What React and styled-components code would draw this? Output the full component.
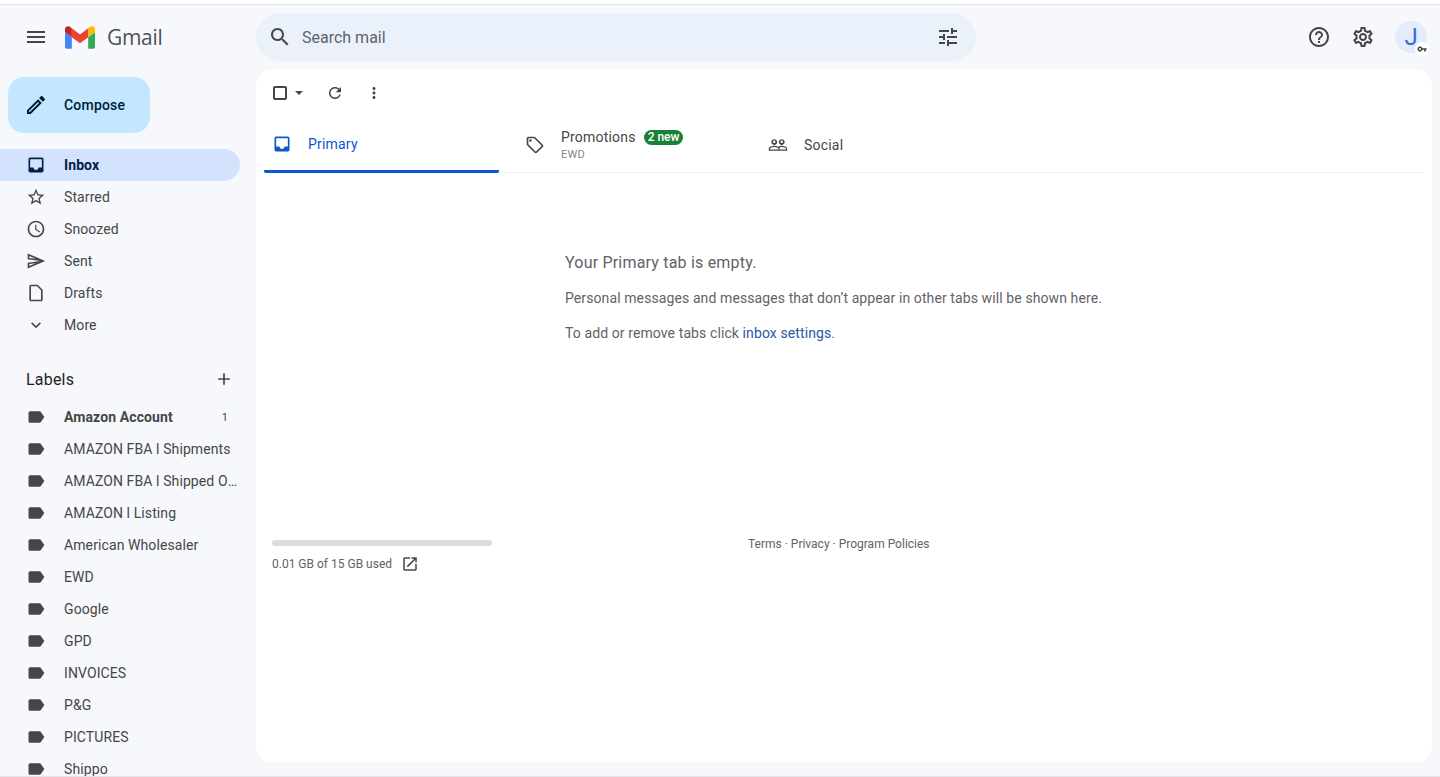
import React from "react";
import styled, { createGlobalStyle } from "styled-components";

const GlobalStyle = createGlobalStyle`
  html, body {
    margin: 0;
    height: 100%;
    overflow: hidden;
    background: #f6f8fc;
    font-family: Roboto, "Liberation Sans", sans-serif;
    color: #444746;
  }
  * { box-sizing: border-box; }
`;

const icons = {
  menu: "M3 18h18v-2H3v2zm0-5h18v-2H3v2zm0-7v2h18V6H3z",
  edit: "M14.06 9.02l.92.92L5.92 19H5v-.92l9.06-9.06M17.66 3c-.25 0-.51.1-.7.29l-1.83 1.83 3.75 3.75 1.83-1.83c.39-.39.39-1.02 0-1.41l-2.34-2.34c-.2-.2-.45-.29-.71-.29zm-3.6 3.19L3 17.25V21h3.75L17.81 9.94l-3.75-3.75z",
  inbox: "M19 3H5c-1.1 0-2 .9-2 2v14c0 1.1.9 2 2 2h14c1.1 0 2-.9 2-2V5c0-1.1-.9-2-2-2zm0 12h-4c0 1.66-1.35 3-3 3s-3-1.34-3-3H5V5h14v10z",
  star: "M22 9.24l-7.19-.62L12 2 9.19 8.63 2 9.24l5.46 4.73L5.82 21 12 17.27 18.18 21l-1.63-7.03L22 9.24zM12 15.4l-3.76 2.27 1-4.28-3.32-2.88 4.38-.38L12 6.1l1.71 4.04 4.38.38-3.32 2.88 1 4.28L12 15.4z",
  clock: "M11.99 2C6.47 2 2 6.48 2 12s4.47 10 9.99 10C17.52 22 22 17.52 22 12S17.52 2 11.99 2zM12 20c-4.42 0-8-3.58-8-8s3.58-8 8-8 8 3.58 8 8-3.58 8-8 8zm.5-13H11v6l5.25 3.15.75-1.23-4.5-2.67z",
  send: "M4.01 6.03l7.51 3.22-7.52-1 .01-2.22m7.5 8.72L4 17.97v-2.22l7.51-1M2.01 3L2 10l15 2-15 2 .01 7L23 12 2.01 3z",
  draft: "M14 2H6c-1.1 0-2 .9-2 2v16c0 1.1.9 2 2 2h12c1.1 0 2-.9 2-2V8l-6-6zM6 20V4h7.17L18 8.83V20H6z",
  expand: "M16.59 8.59L12 13.17 7.41 8.59 6 10l6 6 6-6z",
  add: "M19 13h-6v6h-2v-6H5v-2h6V5h2v6h6v2z",
  label: "M17.63 5.84C17.27 5.33 16.67 5 16 5L5 5.01C3.9 5.01 3 5.9 3 7v10c0 1.1.9 1.99 2 1.99L16 19c.67 0 1.27-.33 1.63-.84L22 12l-4.37-6.16z",
  search: "M15.5 14h-.79l-.28-.27C15.41 12.59 16 11.11 16 9.5 16 5.91 13.09 3 9.5 3S3 5.91 3 9.5 5.91 16 9.5 16c1.61 0 3.09-.59 4.23-1.57l.27.28v.79l5 4.99L20.49 19l-4.99-5zm-6 0C7.01 14 5 11.99 5 9.5S7.01 5 9.5 5 14 7.01 14 9.5 11.99 14 9.5 14z",
  tune: "M3 17v2h6v-2H3zM3 5v2h10V5H3zm10 16v-2h8v-2h-8v-2h-2v6h2zM7 9v2H3v2h4v2h2V9H7zm14 4v-2H11v2h10zm-6-4h2V7h4V5h-4V3h-2v6z",
  help: "M11 18h2v-2h-2v2zm1-16C6.48 2 2 6.48 2 12s4.48 10 10 10 10-4.48 10-10S17.52 2 12 2zm0 18c-4.41 0-8-3.59-8-8s3.59-8 8-8 8 3.59 8 8-3.59 8-8 8zm0-14c-2.21 0-4 1.79-4 4h2c0-1.1.9-2 2-2s2 .9 2 2c0 2-3 1.75-3 5h2c0-2.25 3-2.5 3-5 0-2.21-1.79-4-4-4z",
  settings: "M19.43 12.98c.04-.32.07-.64.07-.98 0-.34-.03-.66-.07-.98l2.11-1.65c.19-.15.24-.42.12-.64l-2-3.46c-.09-.16-.26-.25-.44-.25-.06 0-.12.01-.17.03l-2.49 1c-.52-.4-1.08-.73-1.69-.98l-.38-2.65C14.46 2.18 14.25 2 14 2h-4c-.25 0-.46.18-.49.42l-.38 2.65c-.61.25-1.17.59-1.69.98l-2.49-1c-.06-.02-.12-.03-.18-.03-.17 0-.34.09-.43.25l-2 3.46c-.13.22-.07.49.12.64l2.11 1.65c-.04.32-.07.65-.07.98 0 .33.03.66.07.98l-2.11 1.65c-.19.15-.24.42-.12.64l2 3.46c.09.16.26.25.44.25.06 0 .12-.01.17-.03l2.49-1c.52.4 1.08.73 1.69.98l.38 2.65c.03.24.24.42.49.42h4c.25 0 .46-.18.49-.42l.38-2.65c.61-.25 1.17-.59 1.69-.98l2.49 1c.06.02.12.03.18.03.17 0 .34-.09.43-.25l2-3.46c.12-.22.07-.49-.12-.64l-2.11-1.65zm-1.98-1.71c.04.31.05.52.05.73 0 .21-.02.43-.05.73l-.14 1.13.89.7 1.08.84-.7 1.21-1.27-.51-1.04-.42-.9.68c-.43.32-.84.56-1.25.73l-1.06.43-.16 1.13-.2 1.35h-1.4l-.19-1.35-.16-1.13-1.06-.43c-.43-.18-.83-.41-1.23-.71l-.91-.7-1.06.43-1.27.51-.7-1.21 1.08-.84.89-.7-.14-1.13c-.03-.31-.05-.54-.05-.74s.02-.43.05-.73l.14-1.13-.89-.7-1.08-.84.7-1.21 1.27.51 1.04.42.9-.68c.43-.32.84-.56 1.25-.73l1.06-.43.16-1.13.2-1.35h1.39l.19 1.35.16 1.13 1.06.43c.43.18.83.41 1.23.71l.91.7 1.06-.43 1.27-.51.7 1.21-1.07.85-.89.7.14 1.13zM12 8c-2.21 0-4 1.79-4 4s1.79 4 4 4 4-1.79 4-4-1.79-4-4-4zm0 6c-1.1 0-2-.9-2-2s.9-2 2-2 2 .9 2 2-.9 2-2 2z",
  refresh: "M17.65 6.35C16.2 4.9 14.21 4 12 4c-4.42 0-7.99 3.58-7.99 8s3.57 8 7.99 8c3.73 0 6.84-2.55 7.73-6h-2.08c-.82 2.33-3.04 4-5.65 4-3.31 0-6-2.69-6-6s2.69-6 6-6c1.66 0 3.14.69 4.22 1.78L13 11h7V4l-2.35 2.35z",
  more: "M12 8c1.1 0 2-.9 2-2s-.9-2-2-2-2 .9-2 2 .9 2 2 2zm0 2c-1.1 0-2 .9-2 2s.9 2 2 2 2-.9 2-2-.9-2-2-2zm0 6c-1.1 0-2 .9-2 2s.9 2 2 2 2-.9 2-2-.9-2-2-2z",
  tag: "M21.41 11.58l-9-9C12.05 2.22 11.55 2 11 2H4c-1.1 0-2 .9-2 2v7c0 .55.22 1.05.59 1.42l9 9c.36.36.86.58 1.41.58s1.05-.22 1.41-.59l7-7c.37-.36.59-.86.59-1.41s-.23-1.06-.59-1.42zM13 20.01L4 11V4h7v-.01l9 8.99-7 7.02zM6.5 5A1.5 1.5 0 1 0 6.5 8 1.5 1.5 0 1 0 6.5 5z",
  people: "M16.5 13c-1.2 0-3.07.34-4.5 1-1.43-.67-3.3-1-4.5-1C5.33 13 1 14.08 1 16.25V19h22v-2.75c0-2.17-4.33-3.25-6.5-3.25zm-4 4.5h-10v-1.25c0-.54 2.56-1.75 5-1.75s5 1.21 5 1.75v1.25zm9 0H14v-1.25c0-.46-.2-.86-.52-1.22.88-.3 1.96-.53 3.02-.53 2.44 0 5 1.21 5 1.75v1.25zM7.5 12c1.93 0 3.5-1.57 3.5-3.5S9.43 5 7.5 5 4 6.57 4 8.5 5.57 12 7.5 12zm0-5.5c.83 0 1.5.67 1.5 1.5s-.67 1.5-1.5 1.5S6 8.83 6 8s.67-1.5 1.5-1.5zm9 5.5c1.93 0 3.5-1.57 3.5-3.5S18.43 5 16.5 5 13 6.57 13 8.5s1.57 3.5 3.5 3.5zm0-5.5c.83 0 1.5.67 1.5 1.5s-.67 1.5-1.5 1.5S15 8.83 15 8s.67-1.5 1.5-1.5z",
  external: "M19 19H5V5h7V3H5c-1.11 0-2 .9-2 2v14c0 1.1.89 2 2 2h14c1.1 0 2-.9 2-2v-7h-2v7zM14 3v2h3.59l-9.83 9.83 1.41 1.41L19 6.41V10h2V3h-7z",
  key: "M12.65 10A6 6 0 1 0 12.65 14H17v4h4v-4h2v-4H12.65zM7 14.5A2.5 2.5 0 1 1 7 9.5 2.5 2.5 0 1 1 7 14.5z",
};

const Svg = styled.svg`
  display: block;
  flex: none;
  fill: ${(p) => p.$color || "#444746"};
`;

function Icon({ name, size = 20, color }) {
  return (
    <Svg viewBox="0 0 24 24" width={size} height={size} $color={color} aria-hidden="true">
      <path fillRule="evenodd" d={icons[name]} />
    </Svg>
  );
}

const Page = styled.div`
  height: 777px;
  display: flex;
  flex-direction: column;
  overflow: hidden;
  border-bottom: 1px solid #e4e6ea;
`;

const TopStrip = styled.div`
  height: 5px;
  flex: none;
  background: #fff;
  border-bottom: 1px solid #dfe1e5;
`;

const Header = styled.header`
  height: 64px;
  flex: none;
  display: flex;
  align-items: center;
`;

const Brand = styled.div`
  width: 256px;
  flex: none;
  display: flex;
  align-items: center;
  padding-left: 24px;
`;

const Logo = styled.svg`
  display: block;
  margin-left: 17px;
  margin-right: 12px;
`;

const BrandName = styled.span`
  font-family: "Open Sans", Roboto, sans-serif;
  font-size: 21px;
  color: #4d5156;
  letter-spacing: -0.3px;
`;

const SearchBox = styled.div`
  width: 720px;
  height: 48px;
  border-radius: 24px;
  background: #eaf1fb;
  display: flex;
  align-items: center;
  padding: 0 16px 0 12px;
  gap: 10px;
`;

const SearchText = styled.span`
  flex: 1;
  font-size: 16px;
  color: #5f6368;
`;

const HeaderActions = styled.div`
  margin-left: auto;
  display: flex;
  align-items: center;
  gap: 20px;
  padding-right: 13px;
`;

const Avatar = styled.div`
  position: relative;
  width: 32px;
  height: 32px;
  margin-left: 0;
  border-radius: 50%;
  background: #e3ecfa;
  color: #2f6fd8;
  font-size: 24px;
  display: flex;
  align-items: center;
  justify-content: center;
`;

const KeyBadge = styled.span`
  position: absolute;
  right: -2px;
  bottom: -3px;
  width: 14px;
  height: 14px;
  border-radius: 50%;
  background: #fff;
  display: flex;
  align-items: center;
  justify-content: center;
`;

const Body = styled.div`
  flex: 1;
  min-height: 0;
  display: flex;
`;

const Sidebar = styled.nav`
  width: 256px;
  flex: none;
  padding-top: 8px;
  overflow: hidden;
`;

const Compose = styled.div`
  width: 142px;
  height: 56px;
  margin-left: 8px;
  margin-bottom: 16px;
  border-radius: 16px;
  background: #c2e7ff;
  display: flex;
  align-items: center;
  padding-left: 16px;
  gap: 16px;
  font-size: 14px;
  font-weight: 500;
  letter-spacing: 0.2px;
  color: #001d35;
`;

const NavRow = styled.div`
  width: 240px;
  height: 32px;
  flex: none;
  display: flex;
  align-items: center;
  padding-left: 26px;
  border-radius: 0 16px 16px 0;
  font-size: 14px;
  letter-spacing: 0.1px;
  color: ${(p) => (p.$active ? "#041e49" : "#444746")};
  font-weight: ${(p) => (p.$bold ? 700 : 400)};
  background: ${(p) => (p.$active ? "#d3e3fd" : "transparent")};
`;

const NavLabel = styled.span`
  margin-left: 18px;
  flex: 1;
  white-space: nowrap;
  overflow: hidden;
  text-overflow: ellipsis;
`;

const Count = styled.span`
  font-size: 11px;
  font-weight: 400;
  margin-right: 12px;
  margin-left: 8px;
`;

const LabelsHead = styled.div`
  width: 240px;
  display: flex;
  align-items: center;
  justify-content: space-between;
  padding: 0 6px 0 26px;
  height: 32px;
  margin: 22px 0 6px;
  font-size: 16px;
  color: #1f1f1f;
  letter-spacing: 0.2px;
`;

const Main = styled.main`
  width: 1176px;
  height: 693px;
  flex: none;
  background: #fff;
  border-radius: 16px;
  display: flex;
  flex-direction: column;
  padding: 0 8px;
`;

const Toolbar = styled.div`
  height: 48px;
  flex: none;
  display: flex;
  align-items: center;
  padding-left: 9px;
`;

const Checkbox = styled.span`
  width: 14px;
  height: 14px;
  border: 2px solid #444746;
  border-radius: 2px;
`;

const Caret = styled.span`
  margin-left: 8px;
  width: 0;
  height: 0;
  border: 4px solid transparent;
  border-top: 4px solid #444746;
  border-bottom: 0;
`;

const ToolButton = styled.span`
  margin-left: ${(p) => p.$gap}px;
`;

const Tabs = styled.div`
  height: 56px;
  flex: none;
  display: flex;
  border-bottom: 1px solid #eceff1;
`;

const Tab = styled.div`
  width: ${(p) => p.$width}px;
  height: 56px;
  flex: none;
  display: flex;
  align-items: center;
  padding-left: ${(p) => p.$pad}px;
  gap: ${(p) => p.$gap || 16}px;
  font-size: 14px;
  letter-spacing: 0.2px;
  color: ${(p) => (p.$active ? "#0b57d0" : "#444746")};
  border-bottom: ${(p) => (p.$active ? "3px solid #0b57d0" : "0")};
  border-radius: ${(p) => (p.$active ? "0 0 2px 2px" : "0")};
`;

const TabText = styled.div`
  display: flex;
  flex-direction: column;
  gap: 3px;
`;

const TabTitle = styled.div`
  display: flex;
  align-items: center;
  gap: 8px;
  white-space: nowrap;
`;

const TabSub = styled.div`
  font-size: 11px;
  color: #80868b;
`;

const NewBadge = styled.span`
  height: 15px;
  padding: 0 4px;
  border-radius: 8px;
  background: #188038;
  color: #fff;
  font-size: 12px;
  font-weight: 500;
  line-height: 15px;
  letter-spacing: 0;
`;

const Empty = styled.section`
  padding: 78px 0 0 301px;
  height: 367px;
  flex: none;
  color: #5f6368;
  font-size: 14px;
  letter-spacing: 0.1px;
`;

const EmptyTitle = styled.div`
  font-size: 16px;
  line-height: 24px;
  margin-bottom: 13px;
  letter-spacing: 0.2px;
`;

const EmptyLine = styled.div`
  line-height: 20px;
  margin-bottom: 15px;
`;

const InlineLink = styled.span`
  color: #2a56a8;
`;

const Footer = styled.footer`
  display: flex;
  padding-left: 8px;
  font-size: 12px;
  color: #5f6368;
`;

const Storage = styled.div`
  width: 220px;
  flex: none;
`;

const Bar = styled.div`
  height: 6px;
  border-radius: 3px;
  background: #dadce0;
  margin-bottom: 9px;
`;

const StorageText = styled.div`
  display: flex;
  align-items: center;
  gap: 9px;
`;

const Links = styled.div`
  margin-left: 256px;
  margin-top: -3px;
  line-height: 14px;
`;

const navItems = [
  { name: "inbox", text: "Inbox", active: true, bold: true },
  { name: "star", text: "Starred" },
  { name: "clock", text: "Snoozed" },
  { name: "send", text: "Sent" },
  { name: "draft", text: "Drafts" },
  { name: "expand", text: "More" },
];

const labels = [
  "AMAZON FBA l Shipments",
  "AMAZON FBA l Shipped Orders",
  "AMAZON l Listing",
  "American Wholesaler",
  "EWD",
  "Google",
  "GPD",
  "INVOICES",
  "P&G",
  "PICTURES",
  "Shippo",
];

export default function App() {
  return (
    <>
      <GlobalStyle />
      <Page>
        <TopStrip />
        <Header>
          <Brand>
            <Icon name="menu" size={24} />
            <Logo viewBox="52 42 88 66" width="30" height="23" aria-hidden="true">
              <path fill="#4285f4" d="M58 108h14V74L52 59v43c0 3.32 2.69 6 6 6" />
              <path fill="#34a853" d="M120 108h14c3.32 0 6-2.69 6-6V59l-20 15" />
              <path fill="#fbbc04" d="M120 48v26l20-15v-8c0-7.42-8.47-11.65-14.4-7.2" />
              <path fill="#ea4335" d="M72 74V48l24 18 24-18v26L96 92" />
              <path fill="#c5221f" d="M52 51v8l20 15V48l-5.6-4.2c-5.94-4.45-14.4-.22-14.4 7.2" />
            </Logo>
            <BrandName>Gmail</BrandName>
          </Brand>
          <SearchBox>
            <Icon name="search" size={24} />
            <SearchText>Search mail</SearchText>
            <Icon name="tune" size={24} />
          </SearchBox>
          <HeaderActions>
            <Icon name="help" size={24} />
            <Icon name="settings" size={24} />
            <Avatar>
              J
              <KeyBadge>
                <Icon name="key" size={10} />
              </KeyBadge>
            </Avatar>
          </HeaderActions>
        </Header>
        <Body>
          <Sidebar>
            <Compose>
              <Icon name="edit" size={24} color="#001d35" />
              Compose
            </Compose>
            {navItems.map((item) => (
              <NavRow key={item.text} $active={item.active} $bold={item.bold}>
                <Icon name={item.name} size={20} color={item.active ? "#041e49" : "#444746"} />
                <NavLabel>{item.text}</NavLabel>
              </NavRow>
            ))}
            <LabelsHead>
              Labels
              <Icon name="add" size={20} />
            </LabelsHead>
            <NavRow $bold>
              <Icon name="label" size={20} />
              <NavLabel>Amazon Account</NavLabel>
              <Count>1</Count>
            </NavRow>
            {labels.map((text) => (
              <NavRow key={text}>
                <Icon name="label" size={20} />
                <NavLabel>{text}</NavLabel>
              </NavRow>
            ))}
          </Sidebar>
          <Main>
            <Toolbar>
              <Checkbox />
              <Caret />
              <ToolButton $gap={23}>
                <Icon name="refresh" size={18} />
              </ToolButton>
              <ToolButton $gap={21}>
                <Icon name="more" size={18} />
              </ToolButton>
            </Toolbar>
            <Tabs>
              <Tab $active $width={235} $pad={8} $gap={16}>
                <Icon name="inbox" size={20} color="#0b57d0" />
                Primary
              </Tab>
              <Tab $width={253} $pad={26} $gap={16}>
                <Icon name="tag" size={20} />
                <TabText>
                  <TabTitle>
                    Promotions
                    <NewBadge>2 new</NewBadge>
                  </TabTitle>
                  <TabSub>EWD</TabSub>
                </TabText>
              </Tab>
              <Tab $width={200} $pad={16} $gap={16}>
                <Icon name="people" size={20} />
                Social
              </Tab>
            </Tabs>
            <Empty>
              <EmptyTitle>Your Primary tab is empty.</EmptyTitle>
              <EmptyLine>Personal messages and messages that don’t appear in other tabs will be shown here.</EmptyLine>
              <EmptyLine>
                To add or remove tabs click <InlineLink>inbox settings</InlineLink>.
              </EmptyLine>
            </Empty>
            <Footer>
              <Storage>
                <Bar />
                <StorageText>
                  0.01 GB of 15 GB used
                  <Icon name="external" size={18} />
                </StorageText>
              </Storage>
              <Links>Terms · Privacy · Program Policies</Links>
            </Footer>
          </Main>
        </Body>
      </Page>
    </>
  );
}
